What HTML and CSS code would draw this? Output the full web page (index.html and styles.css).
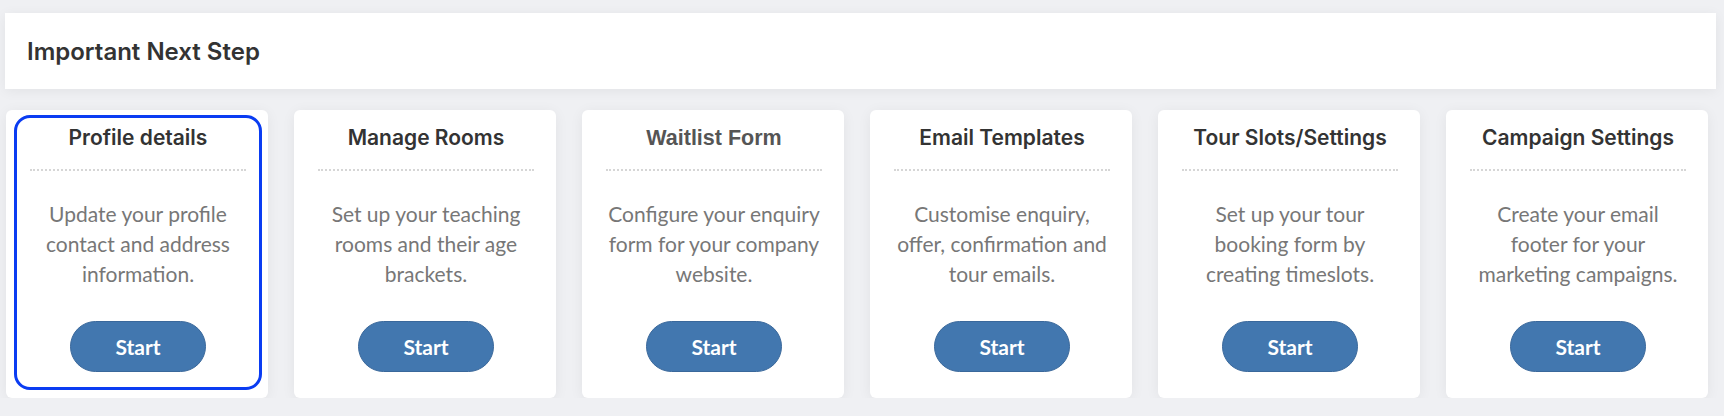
FILE: index.html
```html
<!DOCTYPE html>
<html lang="en">
<head>
  <title>Next Steps</title>

  <link rel="stylesheet" href="styles.css">
</head>
<body>

  <div class="panel">
    <h2>Important Next Step</h2>
  </div>

  <div class="steps">
    <div class="card">
      <div class="step active">
        <h4>Profile details</h4>
        <p>Update your profile contact and address information.</p>
        <button>Start</button>
      </div>
    </div>

    <div class="card">
      <div class="step">
        <h4>Manage Rooms</h4>
        <p>Set up your teaching rooms and their age brackets.</p>
        <button>Start</button>
      </div>
    </div>

    <div class="card">
      <div class="step">
        <h4 class="plain">Waitlist Form</h4>
        <p>Configure your enquiry form for your company website.</p>
        <button>Start</button>
      </div>
    </div>

    <div class="card">
      <div class="step">
        <h4>Email Templates</h4>
        <p>Customise enquiry, offer, confirmation and tour emails.</p>
        <button>Start</button>
      </div>
    </div>

    <div class="card">
      <div class="step">
        <h4>Tour Slots/Settings</h4>
        <p>Set up your tour booking form by creating timeslots.</p>
        <button>Start</button>
      </div>
    </div>

    <div class="card">
      <div class="step">
        <h4>Campaign Settings</h4>
        <p>Create your email footer for your marketing campaigns.</p>
        <button>Start</button>
      </div>
    </div>
  </div>

</body>
</html>
```

FILE: styles.css
```css
body {
  font-family: Inter, "Noto Sans", sans-serif;
  margin: 0;
  padding: 13px 8px 0 5px;
  background-color: #eff0f3;
  color: #333;
}

.panel {
  background-color: white;
  height: 76px;
  box-shadow: 0 2px 12px rgba(0, 0, 0, 0.06);
  display: flex;
  align-items: center;
  padding: 0 22px;
}

.panel h2 {
  margin: 0;
  font-size: 24px;
  font-weight: 600;
  color: #333;
}

.steps {
  display: flex;
  gap: 26px;
  margin-top: 21px;
  padding-left: 1px;
}

.card {
  width: 262px;
  height: 288px;
  background-color: white;
  border-radius: 6px;
  box-shadow: 0 2px 14px rgba(0, 0, 0, 0.06);
  box-sizing: border-box;
  padding: 5px 6px 8px 8px;
}

.step {
  height: 100%;
  box-sizing: border-box;
  border: 3px solid transparent;
  border-radius: 16px;
  padding: 7px 13px 0 13px;
  text-align: center;
}

.step.active {
  border-color: #0a3cf2;
}

.step h4 {
  margin: 0;
  font-size: 21px;
  line-height: 26px;
  font-weight: 600;
  color: #333;
  padding-bottom: 18px;
  border-bottom: 2px dotted #d6d6d6;
}

.step h4.plain {
  font-family: "Liberation Sans", Arial, sans-serif;
  font-size: 21.5px;
  font-weight: bold;
  color: #555;
}

.step p {
  font-family: Lato, sans-serif;
  font-size: 21px;
  line-height: 30px;
  color: #777;
  margin: 28px auto 0;
  width: 216px;
}

.step button {
  margin-top: 32px;
  width: 136px;
  height: 51px;
  border-radius: 26px;
  border: 1px solid #3a689b;
  background-color: #4277af;
  color: white;
  font-family: Lato, sans-serif;
  font-size: 21px;
  font-weight: bold;
  cursor: pointer;
}
```
